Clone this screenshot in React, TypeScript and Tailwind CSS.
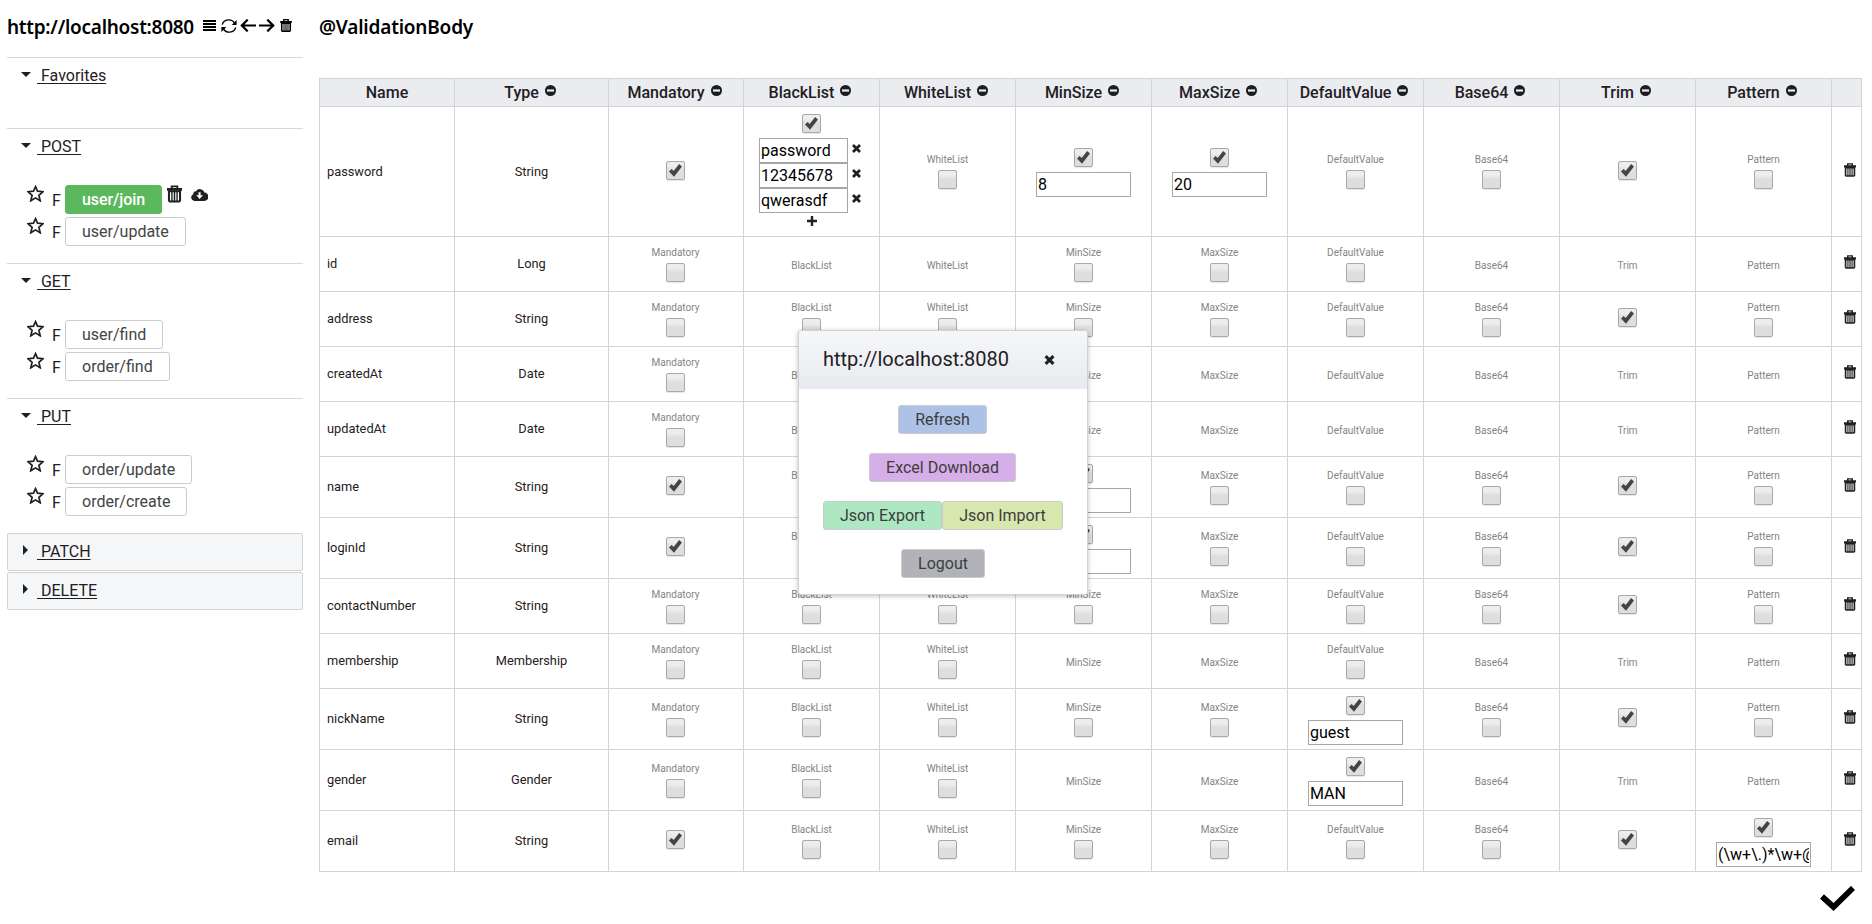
import React from "react";

type IconProps = { className?: string };

function Trash({ className = "" }: IconProps) {
  return (
    <svg viewBox="0 0 16 18" className={className} fill="currentColor">
      <path fillRule="evenodd" d="M4 0h8v2.600H16v3H0v-3h4zM6 1.700v0.900h4V1.700z" />
      <path fillRule="evenodd" d="M1 5h14v11.500L13.500 18H2.500L1 16.500zM3.200 7V16h1.300V7zM6 7V16h1.200V7zM8.800 7V16H10V7zM11.500 7V16h1.300V7z" />
    </svg>
  );
}

function Bars({ className = "" }: IconProps) {
  return (
    <svg viewBox="0 0 13 11" className={className} fill="currentColor">
      <path d="M0 0h13v1.900H0zM0 3h13v1.900H0zM0 6.100h13v1.900H0zM0 9.100h13V11H0z" />
    </svg>
  );
}

function Refresh({ className = "" }: IconProps) {
  return (
    <svg viewBox="0 0 16 14" className={className} fill="none" stroke="currentColor" strokeWidth="1.400">
      <path d="M1.300 5.600A6.600 6.300 0 0 1 13.600 4.400M14.700 8.400A6.600 6.300 0 0 1 2.400 9.600" />
      <path d="M15.600 1v4.900h-4.900zM0.400 13V8.100h4.900z" fill="currentColor" stroke="none" />
    </svg>
  );
}

function Arrow({ className = "" }: IconProps) {
  return (
    <svg viewBox="0 0 16 13" className={className} fill="none" stroke="currentColor" strokeWidth="2.200">
      <path d="M0 6.500H14.500M8.300 0.600l5.900 5.900-5.900 5.900" />
    </svg>
  );
}

function Star({ className = "" }: IconProps) {
  return (
    <svg viewBox="0 0 17 17" className={className} fill="none" stroke="currentColor" strokeWidth="1.700">
      <path d="M8.500 1.700l2 4.500 5.500.5-4.100 3.600 1.300 5.500-4.700-2.900-4.700 2.900 1.300-5.500L1 6.700l5.500-.5z" />
    </svg>
  );
}

function CloudDown({ className = "" }: IconProps) {
  return (
    <svg viewBox="0 0 17 13" className={className} fill="currentColor">
      <path fillRule="evenodd" d="M3.600 13A3.600 3.600 0 0 1 2.200 6.200 3 3 0 0 1 5 3.300 4.600 4.600 0 0 1 13.400 4.600A4.200 4.200 0 0 1 13.200 13zM7.500 4.200v3H5.200L8.600 11 12 7.200H9.600v-3z" />
    </svg>
  );
}

function Minus({ className = "" }: IconProps) {
  return (
    <svg viewBox="0 0 11 11" className={className}>
      <circle cx="5.5" cy="5.5" r="5.5" fill="#1b1c1f" />
      <rect x="2" y="4.400" width="7" height="2.200" fill="#ebecf0" />
    </svg>
  );
}

function Cross({ className = "" }: IconProps) {
  return (
    <svg viewBox="0 0 9 9" className={className} fill="none" stroke="currentColor" strokeWidth="2.800">
      <path d="M1 1l7 7M8 1L1 8" />
    </svg>
  );
}

function Plus({ className = "" }: IconProps) {
  return (
    <svg viewBox="0 0 10 10" className={className} fill="currentColor">
      <path d="M3.800 0h2.400v3.800H10v2.400H6.200V10H3.800V6.200H0V3.800h3.800z" />
    </svg>
  );
}

function Check({ className = "" }: IconProps) {
  return (
    <svg viewBox="0 0 35 25" className={className} fill="none" stroke="currentColor" strokeWidth="5.800">
      <path d="M2 10.500L13.500 21 33 2" />
    </svg>
  );
}

function Box({ checked }: { checked?: boolean }) {
  return (
    <span className="flex size-[19px] shrink-0 items-center justify-center rounded-[2px] border border-[#a9a9a9] bg-linear-to-b from-[#ededed] from-25% to-[#dedede] to-50% shadow-[0_1px_1px_rgba(0,0,0,0.1)]">
      {checked && (
        <svg viewBox="0 0 13 13" className="size-[13px]" fill="#444">
          <path d="M0 7.600L2.600 5 4.700 7 10.100 0 13 2.500 5 12.800z" />
        </svg>
      )}
    </span>
  );
}

function Field({ value, className = "w-[95px]" }: { value: string; className?: string }) {
  return (
    <span className={`block h-[25px] overflow-hidden border border-[#a6a6a6] bg-white px-px text-left text-base leading-6 whitespace-nowrap text-black ${className}`}>
      <span className="block overflow-hidden">{value}</span>
    </span>
  );
}

const COLUMNS = ["Mandatory", "BlackList", "WhiteList", "MinSize", "MaxSize", "DefaultValue", "Base64", "Trim", "Pattern"];

// "on": ticked, "off": unticked with a label, "none": label only,
// "=value": ticked with an input, "list": ticked with a list of inputs
type Row = { name: string; type: string; height: string; cells: string[] };

const ROWS: Row[] = [
  { name: "password", type: "String", height: "h-[130px]", cells: ["on", "list", "off", "=8", "=20", "off", "off", "on", "off"] },
  { name: "id", type: "Long", height: "h-[55px]", cells: ["off", "none", "none", "off", "off", "off", "none", "none", "none"] },
  { name: "address", type: "String", height: "h-[55px]", cells: ["off", "off", "off", "off", "off", "off", "off", "on", "off"] },
  { name: "createdAt", type: "Date", height: "h-[55px]", cells: ["off", "none", "none", "none", "none", "none", "none", "none", "none"] },
  { name: "updatedAt", type: "Date", height: "h-[55px]", cells: ["off", "none", "none", "none", "none", "none", "none", "none", "none"] },
  { name: "name", type: "String", height: "h-[61px]", cells: ["on", "off", "off", "=", "off", "off", "off", "on", "off"] },
  { name: "loginId", type: "String", height: "h-[61px]", cells: ["on", "off", "off", "=", "off", "off", "off", "on", "off"] },
  { name: "contactNumber", type: "String", height: "h-[55px]", cells: ["off", "off", "off", "off", "off", "off", "off", "on", "off"] },
  { name: "membership", type: "Membership", height: "h-[55px]", cells: ["off", "off", "off", "none", "none", "off", "none", "none", "none"] },
  { name: "nickName", type: "String", height: "h-[61px]", cells: ["off", "off", "off", "off", "off", "=guest", "off", "on", "off"] },
  { name: "gender", type: "Gender", height: "h-[61px]", cells: ["off", "off", "off", "none", "none", "=MAN", "none", "none", "none"] },
  { name: "email", type: "String", height: "h-[61px]", cells: ["on", "off", "off", "off", "off", "off", "off", "on", "=(\\w+\\.)*\\w+@"] },
];

function Cell({ kind, label }: { kind: string; label: string }) {
  if (kind === "on")
    return (
      <div className="flex justify-center pb-[3px]">
        <Box checked />
      </div>
    );
  if (kind === "none") return <div className="pt-[3px] text-[10px] leading-[15px] text-[#848484]">{label}</div>;
  if (kind === "off")
    return (
      <div className="flex flex-col items-center pb-0.5">
        <span className="mb-[3px] text-[10px] leading-[15px] text-[#848484]">{label}</span>
        <Box />
      </div>
    );
  if (kind === "list")
    return (
      <div className="flex flex-col items-center pb-1">
        <Box checked />
        <div className="mt-[5px] mb-[3px] flex flex-col pr-[3px]">
          {["password", "12345678", "qwerasdf"].map((v) => (
            <div key={v} className="flex items-center">
              <Field value={v} className="w-[89px]" />
              <Cross className="mb-1 ml-1 size-[9px]" />
            </div>
          ))}
        </div>
        <Plus className="size-[10px]" />
      </div>
    );
  return (
    <div className="flex flex-col items-center gap-[5px] pt-0.5">
      <Box checked />
      <Field value={kind.slice(1)} />
    </div>
  );
}

function Api({ path, active }: { path: string; active?: boolean }) {
  return (
    <div className="flex h-8 items-start pl-[20px]">
      <Star className="size-[17px]" />
      <span className="ml-2 w-[13px] leading-8">F</span>
      <button
        className={
          active
            ? "h-[29px] w-[97px] rounded-[3px] border border-[#5cb85c] bg-[#5cb85c] text-center leading-[28px] font-medium tracking-[-0.05px] text-white"
            : "h-[29px] rounded-[3px] border border-[#ccc] bg-white px-4 leading-[28px] text-[#444]"
        }
      >
        {path}
      </button>
      {active && (
        <>
          <Trash className="ml-[5px] h-[18px] w-[15px]" />
          <CloudDown className="mt-[3px] ml-[9px] h-[13px] w-[17px]" />
        </>
      )}
    </div>
  );
}

function Group({ title, paths, height, active }: { title: string; paths: string[]; height: string; active?: string }) {
  return (
    <section className={`border-t border-[#d8d8d8] ${height}`}>
      <div className="flex h-[56px] pt-[6px] pl-[14px]">
        <svg viewBox="0 0 10 5" className="mt-2 h-[5px] w-[10px]" fill="currentColor">
          <path d="M0 0h10L5 5z" />
        </svg>
        <span className="ml-[6px] leading-6 whitespace-pre underline underline-offset-2">{` ${title}`}</span>
      </div>
      {paths.map((p) => (
        <Api key={p} path={p} active={p === active} />
      ))}
    </section>
  );
}

function Closed({ title }: { title: string }) {
  return (
    <section className="mb-px flex h-[38px] rounded-[2px] border border-[#d4d4d4] bg-[#f5f6f8] pt-[6px] pl-[15px]">
      <svg viewBox="0 0 5 10" className="mt-[5px] h-[10px] w-[5px]" fill="currentColor">
        <path d="M0 0l5 5-5 5z" />
      </svg>
      <span className="ml-[9px] leading-6 whitespace-pre underline underline-offset-2">{` ${title}`}</span>
    </section>
  );
}

const dialogButton = "h-[29px] rounded-[3px] border border-[#ccc] leading-[28px] text-[#3d3d3d]";

function Dialog() {
  return (
    <div className="absolute top-[330px] left-[798px] h-[265px] w-[290px] rounded-[3px] border border-[#d0d2d8] bg-white shadow-[0_1px_5px_rgba(0,0,0,0.25)]">
      <div className="flex h-[58px] items-center justify-between rounded-t-[2px] bg-linear-to-b from-[#f5f7f9] to-[#e9eaef] pr-[32px] pl-6">
        <span className="pb-[3px] text-xl">http://localhost:8080</span>
        <Cross className="h-[10px] w-[11px]" />
      </div>
      <div className="flex flex-col items-center gap-[19px] pt-4">
        <button className={`${dialogButton} mr-px w-[89px] bg-[#aec2e8]`}>Refresh</button>
        <button className={`${dialogButton} mr-px w-[147px] bg-[#d6aee8]`}>Excel Download</button>
        <div className="flex">
          <button className={`${dialogButton} w-[119px] bg-[#aee8c2]`}>Json Export</button>
          <button className={`${dialogButton} w-[121px] bg-[#d6e8ae]`}>Json Import</button>
        </div>
        <button className={`${dialogButton} w-[84px] bg-[#b1b3b8]`}>Logout</button>
      </div>
    </div>
  );
}

export default function App() {
  return (
    <div className="relative flex h-[924px] w-[1872px] overflow-hidden bg-white font-['Roboto',sans-serif] text-base text-[#1f2023]">
      <aside className="w-[303px] shrink-0 pl-[7px]">
        <div className="flex h-[57px] items-start pt-[12px] text-black">
          <h1 className="w-[196px] font-['Noto_Sans',sans-serif] text-[19px] leading-[30px] font-semibold tracking-[-0.27px]">http://localhost:8080</h1>
          <Bars className="mt-2 h-[11px] w-[13px]" />
          <Refresh className="mt-[7px] ml-[5px] h-[14px] w-4" />
          <Arrow className="mt-[7px] ml-[3px] h-[13px] w-4 rotate-180" />
          <Arrow className="mt-[7px] ml-[3px] h-[13px] w-4" />
          <Trash className="mt-[7px] ml-[5px] h-[13px] w-3" />
        </div>
        <Group title="Favorites" paths={[]} height="h-[71px]" />
        <Group title="POST" paths={["user/join", "user/update"]} height="h-[135px]" active="user/join" />
        <Group title="GET" paths={["user/find", "order/find"]} height="h-[135px]" />
        <Group title="PUT" paths={["order/update", "order/create"]} height="h-[135px]" />
        <Closed title="PATCH" />
        <Closed title="DELETE" />
      </aside>
      <main className="ml-4 w-[1543px]">
        <h2 className="h-[78px] pt-[12px] font-['Noto_Sans',sans-serif] text-[19px] leading-[30px] font-semibold tracking-[-0.2px] text-black">@ValidationBody</h2>
        <table className="w-[1543px] table-fixed border-separate border-spacing-0 border-t border-l border-[#d4d4d4]">
          <colgroup>
            <col className="w-[135px]" />
            <col className="w-[154px]" />
            <col className="w-[135px]" />
            {COLUMNS.slice(1).map((c) => (
              <col key={c} className="w-[136px]" />
            ))}
            <col className="w-[30px]" />
          </colgroup>
          <thead>
            <tr className="h-7 bg-[#ebecf0]">
              {["Name", "Type", ...COLUMNS].map((c) => (
                <th key={c} className="border-r border-b border-[#d4d4d4] p-0 text-base leading-[26px] font-medium">
                  {c === "Name" ? (
                    c
                  ) : (
                    <span className="flex items-center justify-center pr-[3px]">
                      {c}
                      <Minus className="mb-1 ml-[6px] size-[11px]" />
                    </span>
                  )}
                </th>
              ))}
              <th className="border-r border-b border-[#d4d4d4] p-0" />
            </tr>
          </thead>
          <tbody>
            {ROWS.map((r) => (
              <tr key={r.name} className={r.height}>
                <td className="border-r border-b border-[#d4d4d4] p-0 pl-[7px] align-middle text-[12.8px] leading-5">{r.name}</td>
                <td className="border-r border-b border-[#d4d4d4] p-0 text-center align-middle text-[12.8px] leading-5">{r.type}</td>
                {r.cells.map((kind, i) => (
                  <td
                    key={COLUMNS[i]}
                    className={`border-r border-b border-[#d4d4d4] p-0 text-center align-middle ${i === 0 ? "pr-px" : ""}`}
                  >
                    <Cell kind={kind} label={COLUMNS[i]} />
                  </td>
                ))}
                <td className="border-r border-b border-[#d4d4d4] p-0 align-middle">
                  <Trash className="mb-1 ml-3 h-[14px] w-3" />
                </td>
              </tr>
            ))}
          </tbody>
        </table>
        <div className="mt-[14px] flex justify-end pr-[7px] text-black">
          <Check className="h-[25px] w-[35px]" />
        </div>
      </main>
      <Dialog />
    </div>
  );
}
